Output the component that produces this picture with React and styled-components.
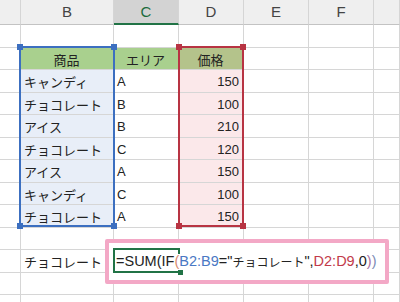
import styled, { createGlobalStyle } from 'styled-components';

const COLS = [
  { key: 'A', w: 21, label: '' },
  { key: 'B', w: 93, label: 'B' },
  { key: 'C', w: 65, label: 'C' },
  { key: 'D', w: 65, label: 'D' },
  { key: 'E', w: 65, label: 'E' },
  { key: 'F', w: 65, label: 'F' },
  { key: 'G', w: 26, label: '' },
];

const ROW_HEIGHTS = [23, 22, 23, 22, 23, 22, 23, 22, 23, 22, 23, 22, 30];

const items = [
  ['キャンディ', 'A', 150],
  ['チョコレート', 'B', 100],
  ['アイス', 'B', 210],
  ['チョコレート', 'C', 120],
  ['アイス', 'A', 150],
  ['キャンディ', 'C', 100],
  ['チョコレート', 'A', 150],
];

const HEAD_GREEN = '#a9d08e';
const BLUE = '#3c6fc0';
const RED = '#b83443';

function buildRows() {
  const rows = ROW_HEIGHTS.map(() => ({}));
  rows[1] = {
    B: { text: '商品', bg: HEAD_GREEN, align: 'center' },
    C: { text: 'エリア', bg: HEAD_GREEN, align: 'center' },
    D: { text: '価格', bg: '#b4c38b', align: 'center' },
  };
  items.forEach(([name, area, price], i) => {
    rows[i + 2] = {
      B: { text: name, bg: '#e8eef8' },
      C: { text: area },
      D: { text: price, bg: '#fbe8ea', align: 'right' },
    };
  });
  rows[10] = { B: { text: 'チョコレート' } };
  return rows;
}

function App() {
  const rows = buildRows();
  return (
    <>
      <GlobalStyle />
      <Sheet>
        <HeaderRow>
          {COLS.map((c) => (
            <ColHead key={c.key} $w={c.w} $active={c.key === 'C'}>
              {c.label}
            </ColHead>
          ))}
        </HeaderRow>

        {rows.map((row, r) => (
          <Row key={r} $h={ROW_HEIGHTS[r]}>
            {COLS.map((c) => {
              const cell = row[c.key];
              return (
                <Cell key={c.key} $w={c.w} $bg={cell?.bg} $align={cell?.align}>
                  {cell?.text}
                </Cell>
              );
            })}
          </Row>
        ))}

        <RangeBox $x={19} $y={46} $w={96} $h={181} $c={BLUE}>
          <Handle $c={BLUE} $pos="tl" />
          <Handle $c={BLUE} $pos="tr" />
          <Handle $c={BLUE} $pos="bl" />
          <Handle $c={BLUE} $pos="br" />
        </RangeBox>
        <RangeBox $x={178} $y={46} $w={66} $h={181} $c={RED}>
          <Handle $c={RED} $pos="tl" />
          <Handle $c={RED} $pos="tr" />
          <Handle $c={RED} $pos="bl" />
          <Handle $c={RED} $pos="br" />
        </RangeBox>

        <Callout />
        <ActiveCell>
          <FillHandle />
        </ActiveCell>
        <Formula>
          =SUM(IF<Tok $c="#d98c6e">(</Tok>
          <Tok $c="#4a78c4">B2:B9</Tok>="<Jp>チョコレート</Jp>",
          <Tok $c="#c23a4a">D2:D9</Tok>,0
          <Tok $c="#a8709f">)</Tok>
          <Tok $c="#7c8bb4">)</Tok>
        </Formula>
      </Sheet>
    </>
  );
}

export default App;

const GlobalStyle = createGlobalStyle`
  html, body {
    margin: 0;
    padding: 0;
    background: #ffffff;
  }
  * {
    box-sizing: border-box;
  }
`;

const Sheet = styled.div`
  position: relative;
  width: 400px;
  height: 302px;
  overflow: hidden;
  background: #ffffff;
  font-family: 'Liberation Sans', 'Noto Sans CJK JP', sans-serif;
`;

const HeaderRow = styled.div`
  display: flex;
  height: 25px;
`;

const ColHead = styled.div`
  flex: 0 0 ${(p) => p.$w}px;
  height: 25px;
  display: flex;
  align-items: center;
  justify-content: center;
  padding-bottom: 1px;
  background: ${(p) => (p.$active ? '#d3d3d3' : '#efefef')};
  border-right: 1px solid #d5d5d5;
  border-bottom: ${(p) => (p.$active ? '2px solid #217346' : '1px solid #c3c3c3')};
  color: ${(p) => (p.$active ? '#1c6b3c' : '#444444')};
  font-size: 15px;
`;

const Row = styled.div`
  display: flex;
  height: ${(p) => p.$h}px;
`;

const Cell = styled.div`
  flex: 0 0 ${(p) => p.$w}px;
  display: flex;
  align-items: center;
  justify-content: ${(p) =>
    p.$align === 'center' ? 'center' : p.$align === 'right' ? 'flex-end' : 'flex-start'};
  padding: 1px 4px 0 3px;
  background: ${(p) => p.$bg || '#ffffff'};
  border-right: 1px solid #d6d6d6;
  border-bottom: 1px solid #d6d6d6;
  color: #222222;
  font-size: 13px;
  white-space: nowrap;
  overflow: hidden;
`;

const RangeBox = styled.div`
  position: absolute;
  left: ${(p) => p.$x}px;
  top: ${(p) => p.$y}px;
  width: ${(p) => p.$w}px;
  height: ${(p) => p.$h}px;
  border: 2px solid ${(p) => p.$c};
`;

const Handle = styled.div`
  position: absolute;
  width: 6px;
  height: 6px;
  background: ${(p) => p.$c};
  ${(p) => (p.$pos[0] === 't' ? 'top: -4px;' : 'bottom: -4px;')}
  ${(p) => (p.$pos[1] === 'l' ? 'left: -4px;' : 'right: -4px;')}
`;

const Callout = styled.div`
  position: absolute;
  left: 105px;
  top: 239px;
  width: 284px;
  height: 45px;
  background: #ffffff;
  border: 4px solid #f3a8c6;
  border-radius: 2px;
`;

const ActiveCell = styled.div`
  position: absolute;
  left: 113px;
  top: 248px;
  width: 67px;
  height: 25px;
  border: 2px solid #217346;
  border-right: none;

  &::after {
    content: '';
    position: absolute;
    right: 0;
    top: -2px;
    width: 2px;
    height: 6px;
    background: #217346;
  }
`;

const FillHandle = styled.div`
  position: absolute;
  right: -3px;
  bottom: -4px;
  width: 5px;
  height: 5px;
  background: #217346;
`;

const Formula = styled.div`
  position: absolute;
  left: 116px;
  top: 250px;
  height: 22px;
  display: flex;
  align-items: center;
  white-space: pre;
  color: #222222;
  font-size: 14.5px;
`;

const Tok = styled.span`
  color: ${(p) => p.$c};
`;

const Jp = styled.span`
  font-family: 'Noto Sans CJK JP', sans-serif;
  font-size: 12px;
`;
